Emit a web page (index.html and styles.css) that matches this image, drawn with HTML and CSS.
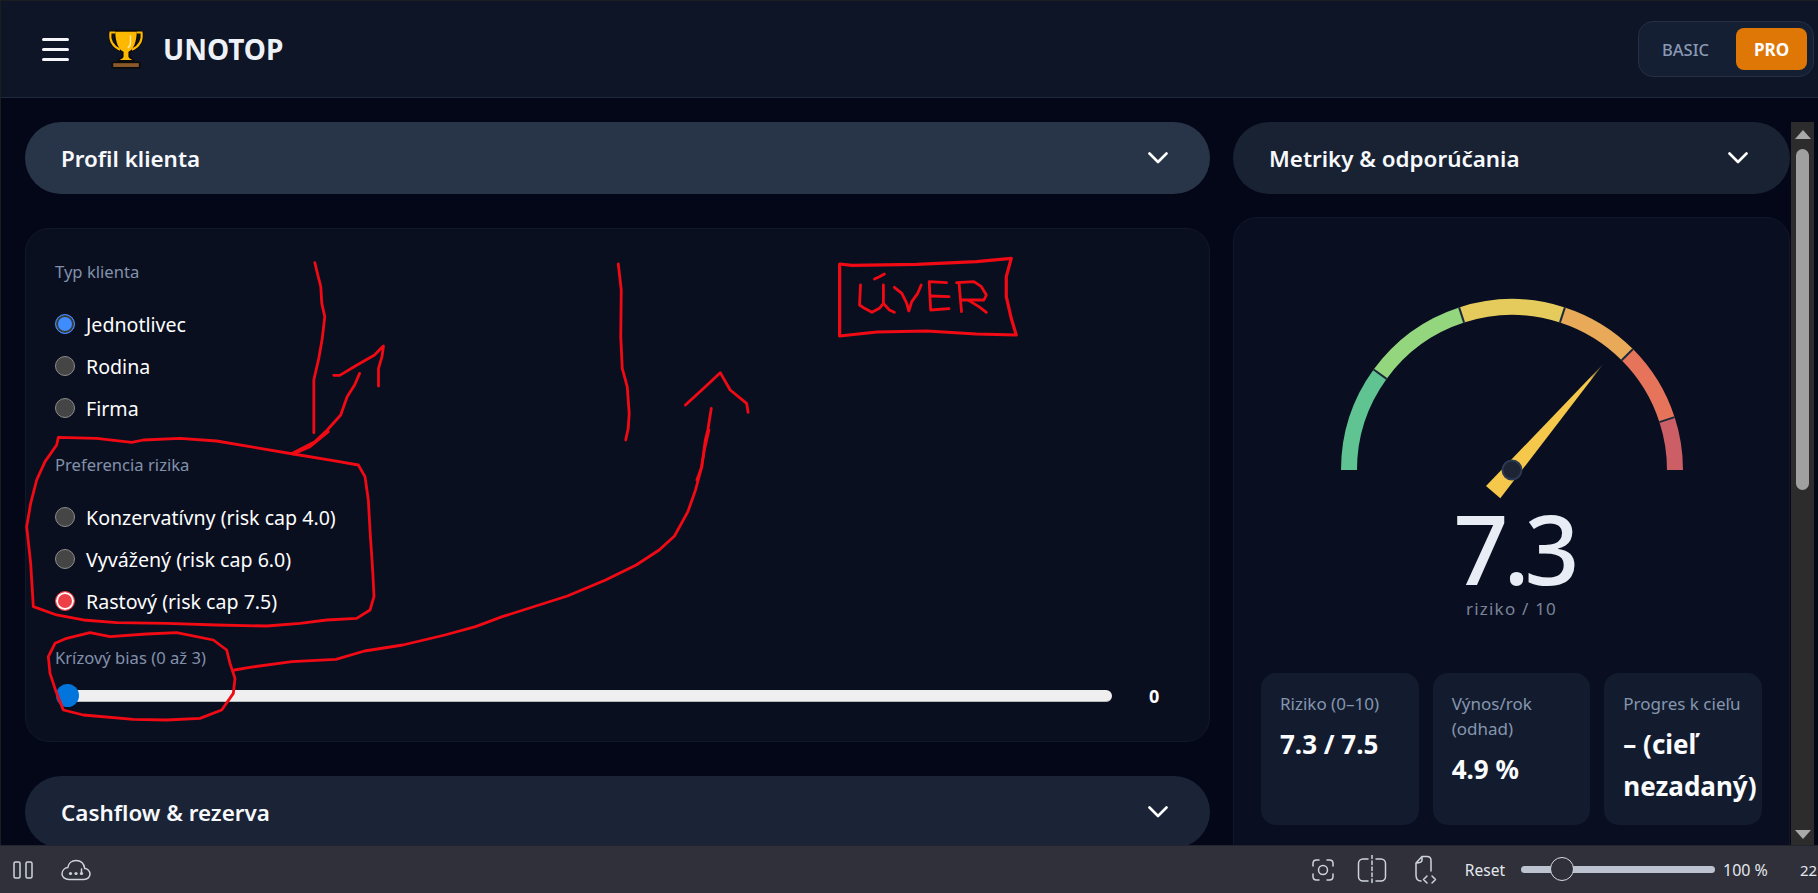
FILE: index.html
```html
<!DOCTYPE html>
<html lang="sk">
<head>
<meta charset="utf-8">
<title>UNOTOP</title>
<link rel="stylesheet" href="styles.css">
</head>
<body>
<div class="app">
  <header class="topbar">
    <div class="burger"><span></span><span></span><span></span></div>
    <svg class="trophy" viewBox="0 0 110 120">
      <g fill="none" stroke="#0b0b0b" stroke-width="11" stroke-linejoin="round" stroke-linecap="round">
        <path d="M24 12H10C6 40 20 54 38 62M86 12H100C104 40 90 54 72 62"/>
        <path d="M24 10H86C86 40 76 62 62 68V82C62 86 68 90 74 92H36C42 90 48 86 48 82V68C34 62 24 40 24 10Z" fill="#0b0b0b"/>
        <path d="M18 102H92V112H18Z" fill="#0b0b0b"/>
      </g>
      <path d="M24 12H10C6 40 20 54 38 62M86 12H100C104 40 90 54 72 62" fill="none" stroke="#ffb800" stroke-width="6"/>
      <path d="M24 10H86C86 40 76 62 62 68V82C62 86 68 90 74 92H36C42 90 48 86 48 82V68C34 62 24 40 24 10Z" fill="#ffb800"/>
      <path d="M68 20V42C68 50 65 54 60 57" fill="none" stroke="#ffe9a8" stroke-width="4"/>
      <path d="M18 101H92V112H18Z" fill="#8b5a2b"/>
    </svg>
    <span class="brand">UNOTOP</span>
    <div class="plan">
      <span class="plan-basic">BASIC</span>
      <span class="plan-pro">PRO</span>
    </div>
  </header>

  <main class="content">
    <div class="column-left">
      <div class="acc acc-open">
        <span>Profil klienta</span>
        <svg class="chev" viewBox="0 0 20 12"><path d="M1.5 1.5 10 10l8.5-8.5"/></svg>
      </div>
      <section class="card profile">
        <div class="field-label">Typ klienta</div>
        <div class="radios">
          <label class="radio"><i class="dot dot-blue"></i>Jednotlivec</label>
          <label class="radio"><i class="dot"></i>Rodina</label>
          <label class="radio"><i class="dot"></i>Firma</label>
        </div>
        <div class="field-label">Preferencia rizika</div>
        <div class="radios">
          <label class="radio"><i class="dot"></i>Konzervatívny (risk cap 4.0)</label>
          <label class="radio"><i class="dot"></i>Vyvážený (risk cap 6.0)</label>
          <label class="radio"><i class="dot dot-red"></i>Rastový (risk cap 7.5)</label>
        </div>
        <div class="field-label">Krízový bias (0 až 3)</div>
        <div class="slider-row">
          <div class="track"><i class="thumb"></i></div>
          <b class="slider-val">0</b>
        </div>
      </section>
      <div class="acc">
        <span>Cashflow &amp; rezerva</span>
        <svg class="chev" viewBox="0 0 20 12"><path d="M1.5 1.5 10 10l8.5-8.5"/></svg>
      </div>
    </div>

    <div class="column-right">
      <div class="acc acc-dark">
        <span>Metriky &amp; odporúčania</span>
        <svg class="chev" viewBox="0 0 20 12"><path d="M1.5 1.5 10 10l8.5-8.5"/></svg>
      </div>
      <section class="card metrics">
        <svg class="gauge" viewBox="0 0 360 210">
          <defs>
            <linearGradient id="needle" gradientUnits="userSpaceOnUse" x1="180" y1="180" x2="272.3" y2="72.7">
              <stop offset="0" stop-color="#f5c84b"/>
              <stop offset=".84" stop-color="#f5c84b"/>
              <stop offset="1" stop-color="#f5c84b" stop-opacity="0"/>
            </linearGradient>
          </defs>
          <g fill="none" stroke-width="16">
            <path d="M17 180A163 163 0 0 1 48.1 84.2" stroke="#5fc392"/>
            <path d="M48.1 84.2A163 163 0 0 1 129.6 25" stroke="#93d67d"/>
            <path d="M129.6 25A163 163 0 0 1 230.4 25" stroke="#e4cb5c"/>
            <path d="M230.4 25A163 163 0 0 1 295.3 64.7" stroke="#e8aa58"/>
            <path d="M295.3 64.7A163 163 0 0 1 335 129.6" stroke="#e5745b"/>
            <path d="M335 129.6A163 163 0 0 1 343 180" stroke="#cc5f66"/>
          </g>
          <g stroke="#1b2a3a" stroke-width="2">
            <path d="M41.6 79.5L54.6 88.9"/>
            <path d="M127.1 17.4L132.1 32.6"/>
            <path d="M232.9 17.4L227.9 32.6"/>
            <path d="M301 59L289.7 70.3"/>
            <path d="M342.6 127.1L327.4 132.1"/>
          </g>
          <path d="M272.3 72.7L168.3 208.3L154 196Z" fill="url(#needle)"/>
          <circle cx="180" cy="180" r="9.5" fill="#1d2433" stroke="#2c3950" stroke-width="2"/>
        </svg>
        <div class="score">7.3</div>
        <div class="score-sub">riziko / 10</div>
        <div class="stats">
          <div class="stat"><div class="stat-label">Riziko (0–10)</div><div class="stat-value">7.3 / 7.5</div></div>
          <div class="stat"><div class="stat-label">Výnos/rok (odhad)</div><div class="stat-value">4.9 %</div></div>
          <div class="stat"><div class="stat-label">Progres k cieľu</div><div class="stat-value">– (cieľ nezadaný)</div></div>
        </div>
      </section>
    </div>

    <div class="scrollbar">
      <i class="sb-up"></i>
      <i class="sb-thumb"></i>
      <i class="sb-down"></i>
    </div>
  </main>

  <footer class="statusbar">
    <svg class="ico ico-pause" viewBox="0 0 20 18"><rect x="1" y="1" width="6" height="16" rx="1.5"/><rect x="13" y="1" width="6" height="16" rx="1.5"/></svg>
    <svg class="ico ico-cloud" viewBox="0 0 30 22"><path d="M8 20.5H23C26.5 20.5 29 18 29 15C29 12 26.5 9.6 23.8 9.6C23 4.5 19.5 1.5 15 1.5C11 1.5 7.5 4 6.8 8.6C3.5 9 1 11.6 1 15C1 18 4 20.5 8 20.5Z"/><circle cx="9.5" cy="14.5" r="1.6" class="ico-fill"/><circle cx="15" cy="14.5" r="1.6" class="ico-fill"/><circle cx="20.5" cy="14.5" r="1.6" class="ico-fill"/><path d="M20.5 14V10"/></svg>
    <div class="status-right">
      <svg class="ico ico-shot" viewBox="0 0 24 24"><path d="M2 8V5.5C2 3.5 3.5 2 5.5 2H8M16 2H18.5C20.5 2 22 3.5 22 5.5V8M22 16V18.5C22 20.5 20.5 22 18.5 22H16M8 22H5.5C3.5 22 2 20.5 2 18.5V16"/><circle cx="12" cy="12" r="4.5"/></svg>
      <svg class="ico ico-split" viewBox="0 0 30 30"><path d="M11 4H6C3.5 4 1.5 6 1.5 8.5V21.5C1.5 24 3.5 26 6 26H11M19 4H24C26.5 4 28.5 6 28.5 8.5V21.5C28.5 24 26.5 26 24 26H19"/><path d="M15 0V30" stroke-dasharray="3.5 2.5"/></svg>
      <svg class="ico ico-code" viewBox="0 0 26 30"><path d="M3 20V8L9 1.5H14C16.5 1.5 18 3 18 5.5V16M3 8C6 8 9 8 9 5V1.5M3 20C3 24 4.5 26 8 26"/><path d="M14 21L10.5 24.5L14 28M19 21L22.5 24.5L19 28"/></svg>
      <span class="reset">Reset</span>
      <div class="zoom"><i class="zoom-thumb"></i></div>
      <span class="zoom-val">100 %</span>
      <span class="clock">22</span>
    </div>
  </footer>

  <svg class="ink" width="1818" height="893" viewBox="0 0 1818 893">
    <g transform="translate(280 240) scale(.49745 .33333)">
      <polyline points="70,68 76,105 82,140 84,190 90,230 85,295 78,355 68,420 68,578"/>
      <polyline points="108,406 120,406 155,375 190,345 205,322 208,318 205,350 198,385 198,438"/>
      <polyline points="25,640 70,605 95,570 122,525 135,470 150,435 160,400"/>
      <polyline points="680,72 686,150 685,290 688,385 698,440 702,520 700,565 695,600"/>
      <polyline points="815,495 855,440 885,398 905,450 938,490 941,517"/>
      <polyline points="867,505 860,570 855,600 848,680 838,720"/>
      <polygon class="ink-thick" points="1125,72 1150,76 1280,73 1400,65 1470,55 1460,110 1460,170 1470,235 1480,285 1400,282 1300,273 1200,276 1125,288"/>
      <polyline points="1195,117 1205,110 1215,102"/>
      <polyline points="1167,135 1165,195 1175,205 1190,217 1205,205 1213,190 1213,135"/>
      <polyline points="1213,190 1225,210 1235,217"/>
      <polyline points="1235,142 1250,160 1260,190 1264,213 1270,185 1282,160 1289,135"/>
      <polyline points="1340,128 1305,125 1308,210 1345,206"/>
      <polyline points="1308,168 1345,170"/>
      <polyline points="1365,130 1370,215"/>
      <polyline points="1360,128 1395,125 1410,140 1420,165 1415,180 1370,180"/>
      <polyline points="1385,182 1405,200 1420,217"/>
    </g>
    <g transform="translate(0 430) scale(.33333)">
      <polygon points="175,22 290,25 395,37 430,30 540,25 650,33 780,55 880,72 1000,92 1075,105 1095,140 1105,210 1110,300 1118,420 1122,500 1110,540 1070,565 980,570 900,580 800,588 650,585 500,580 350,578 250,570 170,555 100,530 92,400 80,290 92,220 110,150 135,95 170,45"/>
      <polyline points="880,72 930,50 985,5"/>
      <polygon points="165,640 200,625 270,608 330,620 440,612 530,608 640,630 680,660 690,700 705,745 700,790 665,840 600,865 500,870 400,868 250,855 190,840 170,790 150,730 145,680"/>
    </g>
    <g transform="translate(200 430) scale(.38265 .33333)">
      <polyline points="1330,0 1318,60 1310,115 1295,180 1275,245 1240,318 1200,360 1140,405 1060,450 960,498 790,560 720,590 640,615 530,645 430,663 355,688 240,695 130,712 90,720"/>
    </g>
  </svg>
</div>
</body>
</html>
```
FILE: styles.css
```css
* { box-sizing: border-box; }
html, body { margin: 0; height: 100%; background: #1a1d22; overflow: hidden; }
body { font-family: "Noto Sans", "Open Sans", sans-serif; color: #fff; }

.app { position: relative; width: 1818px; height: 893px; padding: 1px 0 0 1px; display: flex; flex-direction: column; overflow: hidden; }

.topbar { height: 97px; flex: none; display: flex; align-items: center; padding: 0 4px 0 41px; background: #0d1526; border-bottom: 1px solid #1e2a3c; }
.burger { width: 27px; display: flex; flex-direction: column; gap: 7px; margin-right: 38px; }
.burger span { display: block; height: 3px; border-radius: 2px; background: #f4f6fa; }
.trophy { width: 38px; height: 42px; margin-right: 18px; }
.brand { font-size: 28px; font-weight: 700; color: #eef2f8; flex: 1; }
.plan { width: 176px; height: 56px; display: flex; align-items: center; justify-content: space-between; padding: 0 6px 0 23px; border: 1.5px solid #262f45; border-radius: 15px; background: #151f33; }
.plan-basic { font-size: 16.5px; font-weight: 500; color: #8a99b5; }
.plan-pro { width: 71px; height: 42px; display: flex; align-items: center; justify-content: center; border-radius: 8px; background: #de7706; font-size: 17px; font-weight: 700; color: #fff; }

.content { flex: 1; min-height: 0; display: flex; padding: 0 5px 0 24px; background: #030718; overflow: hidden; }
.column-left { width: 1185px; padding-top: 24px; display: flex; flex-direction: column; gap: 34px; flex: none; }
.column-right { width: 557px; margin-left: 23px; padding-top: 24px; display: flex; flex-direction: column; gap: 23px; flex: none; }

.acc { height: 72px; flex: none; display: flex; align-items: center; justify-content: space-between; padding: 0 42px 0 36px; border-radius: 36px; background: #1a2436; font-size: 22.4px; font-weight: 600; color: #f7f9fc; }
.acc-open { background: #283548; }
.acc-dark { background: #192233; }
.chev { width: 20px; height: 12px; fill: none; stroke: #fff; stroke-width: 2.6; stroke-linecap: round; stroke-linejoin: round; }

.card { background: #0a0f20; border: 1px solid #121829; border-radius: 24px; flex: none; }
.profile { height: 514px; padding: 33px 29px 0; }
.field-label { height: 20px; line-height: 20px; font-size: 16.6px; color: #8291aa; }
.radios { margin: 21px 0 26px; }
.radio { height: 42px; display: flex; align-items: center; gap: 11px; font-size: 19.6px; color: #fdfdfd; }
.dot { width: 20px; height: 20px; border-radius: 50%; border: 1.5px solid #8c8c8c; background: #454545; flex: none; }
.dot-blue { background: #3f8cff; border-color: #3f8cff; box-shadow: inset 0 0 0 2px #3d3a34; }
.dot-red { background: #ef3f46; border-color: #ef3f46; box-shadow: inset 0 0 0 2px #fbfbfb; }

.slider-row { display: flex; align-items: center; margin-top: 16px; padding-right: 20px; }
.track { position: relative; flex: 1; height: 12px; margin-left: 2px; border-radius: 6px; background: #efefef; border-bottom: 1px solid #b9b9b9; }
.thumb { position: absolute; left: -1px; top: -6px; width: 23px; height: 23px; border-radius: 50%; background: #0275dc; }
.slider-val { width: 11px; margin-left: 37px; font-size: 18px; font-weight: 700; }

.metrics { height: 700px; padding: 72px 27px 0; background: #090f21; display: flex; flex-direction: column; align-items: center; }
.gauge { width: 360px; height: 210px; flex: none; }
.score { font-size: 96px; line-height: 96px; font-weight: 500; letter-spacing: -5px; margin-right: -5px; color: #e8ecf5; }
.score-sub { font-size: 17px; line-height: 20px; letter-spacing: 1.2px; color: #7a8499; margin-top: 3px; }
.stats { width: 100%; display: grid; grid-template-columns: repeat(3, 1fr); gap: 14px; margin-top: 54px; }
.stat { height: 152px; padding: 18px 4px 0 19px; border-radius: 15px; background: #131c2e; }
.stat-label { font-size: 17px; line-height: 25px; color: #8596ae; }
.stat-value { font-size: 26px; line-height: 42px; font-weight: 700; color: #fbfcfe; margin-top: 7px; }

.scrollbar { width: 23px; margin: 24px 0 0 1px; flex: none; background: #2c2c2c; display: flex; flex-direction: column; align-items: center; padding: 8px 0 6px; }
.sb-up { width: 0; height: 0; border: 8px solid transparent; border-top: 0; border-bottom: 9px solid #a9a9a9; }
.sb-thumb { width: 13px; height: 341px; margin-top: 10px; border-radius: 7px; background: #a0a0a0; }
.sb-down { width: 0; height: 0; margin-top: auto; border: 8px solid transparent; border-bottom: 0; border-top: 9px solid #a9a9a9; }

.statusbar { height: 48px; flex: none; margin-left: -1px; display: flex; align-items: center; padding-left: 13px; background: #2f3039; border-top: 1px solid #24252c; color: #d6dae2; }
.ico { fill: none; stroke: #cfd3db; stroke-width: 1.5; stroke-linecap: round; stroke-linejoin: round; flex: none; }
.ico-fill { fill: #cfd3db; stroke: none; }
.ico-pause { width: 20px; height: 18px; }
.ico-cloud { width: 30px; height: 22px; margin-left: 28px; }
.status-right { margin-left: auto; display: flex; align-items: center; }
.ico-shot { width: 24px; height: 24px; }
.ico-split { width: 30px; height: 30px; margin-left: 22px; }
.ico-code { width: 26px; height: 30px; margin-left: 26px; }
.reset { font-size: 15.5px; margin-left: 26px; color: #e4e7ee; }
.zoom { position: relative; width: 194px; height: 7px; margin-left: 16px; border-radius: 4px; background: #bcc2cf; }
.zoom-thumb { position: absolute; left: 29px; top: -9px; width: 24px; height: 24px; border-radius: 50%; background: #2f3039; border: 1.5px solid #d8dbe2; }
.zoom-val { font-size: 16px; margin-left: 8px; width: 77px; color: #e4e7ee; }
.clock { font-size: 15px; width: 18px; overflow: hidden; color: #e4e7ee; }

.ink { position: absolute; left: 0; top: 0; pointer-events: none; }
.ink polyline, .ink polygon { fill: none; stroke: #f10a14; stroke-width: 2.8; stroke-linejoin: round; stroke-linecap: round; vector-effect: non-scaling-stroke; }
.ink .ink-thick { stroke-width: 3.2; }
```
